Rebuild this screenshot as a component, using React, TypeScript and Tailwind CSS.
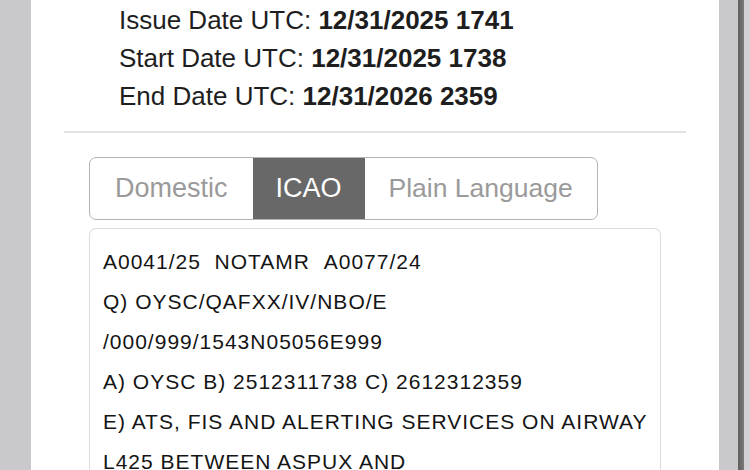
export default function App() {
  const dates = [
    { label: "Issue Date UTC:", value: "12/31/2025 1741" },
    { label: "Start Date UTC:", value: "12/31/2025 1738" },
    { label: "End Date UTC:", value: "12/31/2026 2359" },
  ];
  const tabs = ["Domestic", "ICAO", "Plain Language"];
  const notam = [
    "A0041/25\u00a0\u00a0NOTAMR\u00a0\u00a0A0077/24",
    "Q) OYSC/QAFXX/IV/NBO/E",
    "/000/999/1543N05056E999",
    "A) OYSC B) 2512311738 C) 2612312359",
    "E) ATS, FIS AND ALERTING SERVICES ON AIRWAY",
    "L425 BETWEEN ASPUX AND",
  ];

  return (
    <div
      className="flex h-[470px] w-[750px] overflow-hidden bg-white"
      style={{ fontFamily: '"Liberation Sans", Arial, sans-serif' }}
    >
      <div className="w-[31px] shrink-0 bg-[#c8c8cd]" />

      <div className="flex min-w-0 flex-1 flex-col bg-white">
        <div className="shrink-0 pl-[88px] pt-[1px] text-[26px] leading-[38px] text-[#1e1e1e]">
          {dates.map((d) => (
            <div key={d.label} className="whitespace-nowrap">
              {d.label} <span className="font-bold">{d.value}</span>
            </div>
          ))}
        </div>

        <div className="mx-[33px] mt-[16px] h-[2px] shrink-0 bg-[#e2e2e2]" />

        <div className="ml-[58px] mt-[24px] flex h-[63px] w-fit shrink-0 overflow-hidden rounded-[7px] border border-[#b4b4b4]">
          {tabs.map((t) =>
            t === "ICAO" ? (
              <div
                key={t}
                className="flex items-center bg-[#686868] px-[23px] text-[27px] text-white"
              >
                {t}
              </div>
            ) : t === "Domestic" ? (
              <div
                key={t}
                className="flex items-center px-[25px] text-[27px] text-[#9a9a9a]"
              >
                {t}
              </div>
            ) : (
              <div
                key={t}
                className="flex items-center px-[24px] text-[26.5px] text-[#9a9a9a]"
              >
                {t}
              </div>
            )
          )}
        </div>

        <div className="ml-[58px] mt-[8px] w-[572px] shrink-0 rounded-t-[7px] border border-b-0 border-[#dcdcdc] pb-4 pl-[13px] pt-[13px] text-[21px] leading-[40px] tracking-[1px] text-[#141414]">
          {notam.map((line) => (
            <div key={line} className="whitespace-nowrap">
              {line}
            </div>
          ))}
        </div>
      </div>

      <div className="w-[19px] shrink-0 bg-[#c8c8cd]" />
      <div className="w-[6px] shrink-0 bg-gradient-to-r from-[#5e5e5e] to-[#7a7a7a]" />
      <div className="w-[6px] shrink-0 bg-[#d2d2d6]" />
    </div>
  );
}
